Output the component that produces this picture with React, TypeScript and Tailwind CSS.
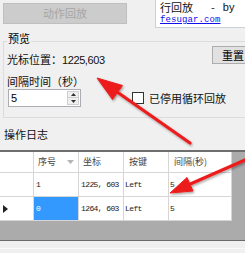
import React from "react";

const cjk = "font-['Noto_Sans_CJK_SC',sans-serif]";
const mono = "font-['Liberation_Mono',monospace]";

function HeaderCell({ w, pl, text, sort }: { w: string; pl: string; text: string; sort?: boolean }) {
  return (
    <div className={`${w} ${pl} h-full flex items-center border-r border-[#d6d6d6] bg-white text-[9px] leading-[10px] text-[#444] ${cjk}`}>
      <span>{text}</span>
      {sort && (
        <svg className="ml-auto mr-[4px]" width="7" height="4" viewBox="0 0 7 4">
          <polygon points="0,0 7,0 3.5,4" fill="#b4b4b4" />
        </svg>
      )}
    </div>
  );
}

function Cell({ w, pl, text, selected }: { w: string; pl: string; text: string; selected?: boolean }) {
  return (
    <div
      className={`${w} ${pl} h-full flex items-center border-r border-[#d6d6d6] text-[8px] tracking-[-0.6px] ${mono} ${
        selected ? "bg-[#3399ff] text-white" : "bg-white text-[#222]"
      }`}
    >
      {text}
    </div>
  );
}

export default function App() {
  return (
    <div className={`relative w-[245px] h-[253px] overflow-hidden bg-[#f0f0f0] text-black ${cjk}`}>
      {/* top row */}
      <div className="flex h-[28px] items-start">
        <div className="ml-[3px] mt-[3px] w-[134px] h-[21px] bg-[#cccccc] border border-[#bfbfbf] flex items-center justify-center text-[11px] text-[#a6a6a6]">
          动作回放
        </div>
        <div className="ml-[28px] w-[90px] h-[28px] shrink-0 bg-white border-l border-b border-[#c9d0da] pl-[4px] pt-[2px]">
          <div className="flex items-center h-[11px] text-[11px] leading-[11px] text-[#111]">
            <span>行回放</span>
            <span className="ml-[18px]">-</span>
            <span className="ml-[8px] font-['Liberation_Sans',sans-serif]">by</span>
          </div>
          <div className={`mt-[1px] h-[12px] leading-[12px] text-[9px] tracking-[0.1px] text-[#1010ee] underline ${mono}`}>
            fesugar.com
          </div>
        </div>
      </div>

      {/* group box */}
      <div className="mt-[4px] ml-[3px]">
        <div className="relative z-10 ml-[4px] w-fit px-[1px] h-[12px] leading-[12px] text-[11px] bg-[#f0f0f0] -mb-[3px]">
          预览
        </div>
        <div className="w-[300px] h-[77px] border border-[#dcdcdc]">
          <div className="flex items-start">
            <div className="w-[208px] pl-[3px] pt-[9px] leading-[16px] text-[11px] text-[#111]">
              光标位置：<span className="font-['Liberation_Sans',sans-serif] tracking-[-0.4px]">1225,603</span>
            </div>
            <div className="mt-[4px] w-[42px] h-[18px] bg-[#e1e1e1] border border-[#adadad] flex items-center justify-center text-[11px]">
              重置
            </div>
          </div>
          <div className="mt-[5px] pl-[3px] leading-[16px] text-[11px] text-[#111]">间隔时间（秒）</div>
          <div className="flex items-center">
            <div className="ml-[4px] w-[73px] h-[18px] bg-white border border-[#abadb3] flex items-center">
              <span className="pl-[2px] text-[11px] leading-[11px] font-['Liberation_Sans',sans-serif]">5</span>
              <div className="ml-auto mr-[1px] w-[12px] h-[14px] flex flex-col">
                <div className="h-[7px] bg-[#f0f0f0] border border-[#cfcfcf] flex items-center justify-center">
                  <svg width="5" height="3" viewBox="0 0 5 3">
                    <polygon points="0,3 5,3 2.5,0" fill="#333" />
                  </svg>
                </div>
                <div className="h-[7px] bg-[#f0f0f0] border border-t-0 border-[#cfcfcf] flex items-center justify-center">
                  <svg width="5" height="3" viewBox="0 0 5 3">
                    <polygon points="0,0 5,0 2.5,3" fill="#333" />
                  </svg>
                </div>
              </div>
            </div>
            <div className="ml-[51px] w-[12px] h-[12px] bg-white border border-[#333]" />
            <div className="ml-[5px] text-[11px] leading-[16px] text-[#111]">已停用循环回放</div>
          </div>
        </div>
      </div>

      {/* log label */}
      <div className="mt-[8px] pl-[4px] leading-[16px] text-[11px] text-[#111]">操作日志</div>

      {/* grid */}
      <div className="mt-[8px] h-[91px] border-t-2 border-b border-t-[#6e6e6e] border-b-[#6a6a6a] bg-[#ababab]">
        <div className="flex h-[21px] border-b border-[#d6d6d6] w-[232px]">
          <div className="w-[34px] h-full bg-white border-r border-[#d6d6d6]" />
          <HeaderCell w="w-[45px]" pl="pl-[4px]" text="序号" sort />
          <HeaderCell w="w-[45px]" pl="pl-[4px]" text="坐标" />
          <HeaderCell w="w-[45px]" pl="pl-[5px]" text="按键" />
          <HeaderCell w="w-[63px]" pl="pl-[5px]" text="间隔(秒)" />
        </div>
        <div className="flex h-[24px] border-b border-[#d6d6d6] w-[232px]">
          <div className="w-[34px] h-full bg-white border-r border-[#d6d6d6]" />
          <Cell w="w-[45px]" pl="pl-[2px]" text="1" />
          <Cell w="w-[45px]" pl="pl-[2px]" text="1225, 603" />
          <Cell w="w-[45px]" pl="pl-[1px]" text="Left" />
          <Cell w="w-[63px]" pl="pl-[1px]" text="5" />
        </div>
        <div className="flex h-[24px] border-b border-[#d6d6d6] w-[232px]">
          <div className="w-[34px] h-full bg-white border-r border-[#d6d6d6] flex items-center pl-[3px]">
            <svg width="5" height="8" viewBox="0 0 5 8">
              <polygon points="0,0 5,4 0,8" fill="#222" />
            </svg>
          </div>
          <Cell w="w-[45px]" pl="pl-[2px]" text="0" selected />
          <Cell w="w-[45px]" pl="pl-[2px]" text="1264, 603" />
          <Cell w="w-[45px]" pl="pl-[1px]" text="Left" />
          <Cell w="w-[63px]" pl="pl-[1px]" text="5" />
        </div>
      </div>
      <div className="mt-[7px] border-t border-[#fafafa]" />

      {/* annotation arrows */}
      <svg className="absolute inset-0 pointer-events-none" width="245" height="253" viewBox="0 0 245 253">
        <defs>
          <filter id="sh" x="-20%" y="-20%" width="140%" height="140%">
            <feDropShadow dx="1" dy="1.5" stdDeviation="1.2" floodColor="#000" floodOpacity="0.35" />
          </filter>
        </defs>
        <g filter="url(#sh)" fill="#ec1c1c" stroke="#ec1c1c">
          <line x1="190" y1="143" x2="115" y2="90.5" strokeWidth="3.2" strokeLinecap="round" />
          <polygon points="97,78 122.5,85.5 112.5,99.5" strokeWidth="1" strokeLinejoin="round" />
          <line x1="252" y1="157" x2="188" y2="185" strokeWidth="3.2" strokeLinecap="round" />
          <polygon points="170,193 193,191 187,177.5" strokeWidth="1" strokeLinejoin="round" />
        </g>
      </svg>
    </div>
  );
}
